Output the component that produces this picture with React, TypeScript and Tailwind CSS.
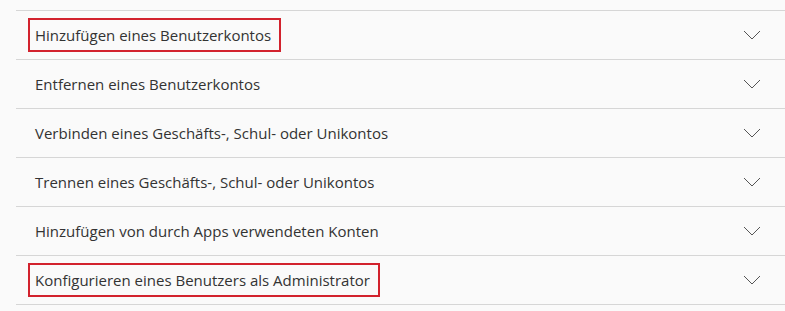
import React from 'react';

const items = [
  { label: 'Hinzufügen eines Benutzerkontos', marked: true },
  { label: 'Entfernen eines Benutzerkontos', marked: false },
  { label: 'Verbinden eines Geschäfts-, Schul- oder Unikontos', marked: false },
  { label: 'Trennen eines Geschäfts-, Schul- oder Unikontos', marked: false },
  { label: 'Hinzufügen von durch Apps verwendeten Konten', marked: false },
  { label: 'Konfigurieren eines Benutzers als Administrator', marked: true },
];

const Chevron = () => (
  <svg width="18" height="10" viewBox="0 0 18 10" fill="none" className="text-[#555]">
    <path d="M1 1 L9 9 L17 1" stroke="currentColor" strokeWidth="1" />
  </svg>
);

export default function App() {
  return (
    <div
      className="w-[785px] h-[311px] bg-[#fafafa] pt-[10px] pl-4 overflow-hidden"
      style={{ fontFamily: '"Open Sans", "Noto Sans", sans-serif' }}
    >
      <div className="border-t border-[#d6d6d6]">
        {items.map((item) => (
          <div
            key={item.label}
            className="flex items-center justify-between h-[49px] border-b border-[#d6d6d6] pl-3 pr-[24px]"
          >
            <span
              className={`text-[15px] text-[#333] leading-[30px] pl-[5px] pr-[8px] border-2 ${
                item.marked ? 'border-[#d2222d]' : 'border-transparent'
              }`}
            >
              {item.label}
            </span>
            <Chevron />
          </div>
        ))}
      </div>
    </div>
  );
}
